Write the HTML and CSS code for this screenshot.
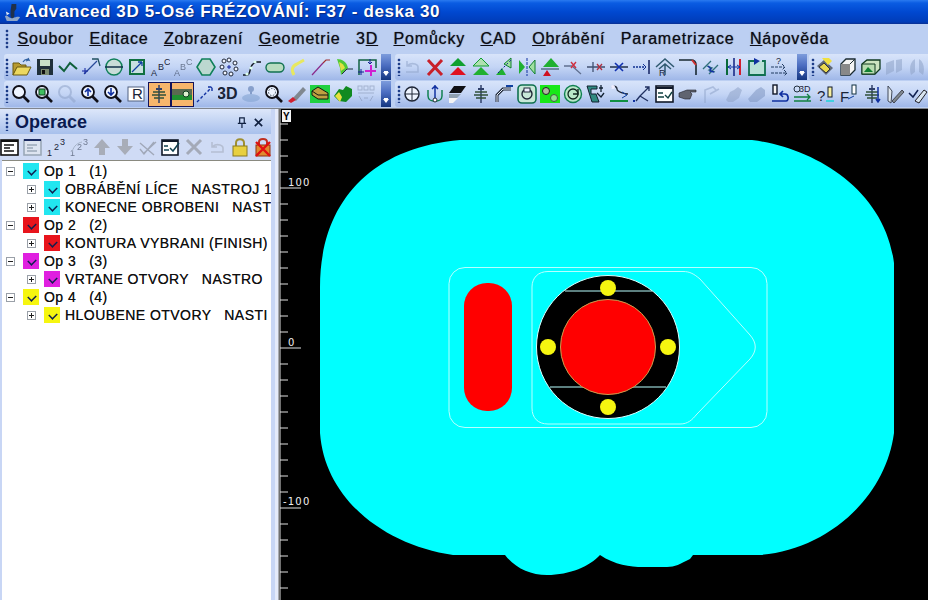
FILE: index.html
```html
<!DOCTYPE html>
<html lang="cs">
<head>
<meta charset="utf-8">
<title>Advanced 3D 5-Osé FRÉZOVÁNÍ</title>
<link rel="stylesheet" href="styles.css">
</head>
<body>
<svg class="defs" aria-hidden="true">
  <defs>
    <symbol id="mag" viewBox="0 0 20 20"><circle cx="8" cy="8" r="6" fill="#eef4ff" stroke="#101018" stroke-width="1.8"/><path d="M12.500 12.500L18 18" stroke="#101018" stroke-width="2.600"/></symbol>
    <symbol id="magf" viewBox="0 0 20 20"><circle cx="8" cy="8" r="6" fill="none" stroke="#8fa3c8" stroke-width="2"/><path d="M12.500 12.500L18 18" stroke="#8fa3c8" stroke-width="3"/></symbol>
    <symbol id="drill" viewBox="0 0 20 20"><path d="M10 1V19" stroke="#30406a" stroke-width="1.500"/><path d="M4 8H16M3 11H17M5 14H15" stroke="#30503a" stroke-width="1.600"/><path d="M7 5H13" stroke="#30406a" stroke-width="2"/></symbol>
  </defs>
</svg>
<div class="app">
  <header class="titlebar">
    <svg class="ic app-ic" viewBox="0 0 20 20"><path d="M9 1h5v5l-2 3v5l-2 4-2-4V8z" fill="#20304a"/><path d="M2 14c3-3 4 3 8 2s5-2 8-1l-3 4H4z" fill="#8fa6c8"/><path d="M3 9l4 2-3 2z" fill="#e0e8f5"/></svg>
    <span>Advanced 3D 5-Osé FRÉZOVÁNÍ: F37 - deska 30</span>
  </header>
  <nav class="menubar">
    <i class="handle"></i>
    <a><u>S</u>oubor</a><a><u>E</u>ditace</a><a><u>Z</u>obrazení</a><a><u>G</u>eometrie</a><a>3<u>D</u></a><a><u>P</u>omůcky</a><a><u>C</u>AD</a><a><u>O</u>brábění</a><a>Parametrizace</a><a><u>N</u>ápověda</a>
  </nav>
  <div class="toolrow">
    <div class="toolbar tb-a">
      <i class="handle"></i>
      <svg class="ic" viewBox="0 0 20 20"><path d="M1 6h6l2 2h5v3H5L1 18z" fill="#b89a30" stroke="#6a5a10"/><path d="M5 10h14l-4 8H1z" fill="#ecd860" stroke="#6a5a10"/><path d="M11 5c2-3 4-3 6-2l-1-2M17 3l-3 1" fill="none" stroke="#3060a0" stroke-width="1.300"/></svg>
      <svg class="ic" viewBox="0 0 20 20"><rect x="2" y="2" width="16" height="16" fill="#20303a"/><rect x="5" y="3" width="10" height="6" fill="#c8e0c8"/><rect x="6" y="12" width="8" height="6" fill="#7a8a70"/><rect x="7" y="13" width="3" height="4" fill="#101010"/></svg>
      <svg class="ic" viewBox="0 0 20 20"><path d="M1 9l5 5 6-8 7 6" fill="none" stroke="#10603a" stroke-width="2"/></svg>
      <svg class="ic" viewBox="0 0 20 20"><path d="M3 17L16 4" stroke="#2a4a9a" stroke-width="1.200"/><path d="M11 2h6l2 7" fill="none" stroke="#205060" stroke-width="1.300"/><path d="M1 14h6M4 11v6" stroke="#1020a0"/></svg>
      <svg class="ic" viewBox="0 0 20 20"><circle cx="10" cy="10" r="8" fill="#c8dcd8" stroke="#10805a" stroke-width="1.500"/><path d="M1 10h18" stroke="#10304a" stroke-width="1.600"/></svg>
      <svg class="ic" viewBox="0 0 20 20"><rect x="3" y="3" width="14" height="14" fill="#c8e0e0" stroke="#107040" stroke-width="2"/><path d="M5 15L15 5M15 5h-4M15 5v4" fill="none" stroke="#1040a0" stroke-width="1.300"/></svg>
      <svg class="ic" viewBox="0 0 20 20"><text x="1" y="19" class="ictext">A</text><text x="8" y="13" class="ictext">B</text><text x="14" y="8" class="ictext">C</text></svg>
      <svg class="ic faded" viewBox="0 0 20 20"><text x="1" y="19" class="ictext">A</text><text x="7" y="13" class="ictext">B</text><text x="13" y="8" class="ictext">C</text></svg>
      <svg class="ic" viewBox="0 0 20 20"><path d="M6 2h8l5 8-5 8H6l-5-8z" fill="#bcd8d0" stroke="#10805a" stroke-width="1.600"/></svg>
      <svg class="ic" viewBox="0 0 20 20" fill="#f0f4ff" stroke="#202838"><circle cx="10" cy="3" r="2"/><circle cx="16" cy="6" r="2"/><circle cx="17" cy="12" r="2"/><circle cx="12" cy="17" r="2"/><circle cx="6" cy="16" r="2"/><circle cx="3" cy="10" r="2"/><circle cx="5" cy="4" r="2"/><path d="M8 10h4M10 8v4" stroke="#1020a0"/></svg>
      <svg class="ic" viewBox="0 0 20 20"><path d="M1 18h4c4 0 2-8 6-11l3-2h5" fill="none" stroke="#101820" stroke-width="1.500"/><circle cx="5" cy="17" r="1.600" fill="#dfe"/><circle cx="9" cy="11" r="1.600" fill="#dfe"/><circle cx="13" cy="5" r="1.600" fill="#dfe"/></svg>
      <svg class="ic" viewBox="0 0 20 20"><rect x="1" y="6" width="18" height="9" rx="4.500" fill="#b8dcc0" stroke="#107050" stroke-width="1.400"/></svg>
      <svg class="ic" viewBox="0 0 20 20"><path d="M6 18C3 13 4 9 9 7l7-4" fill="none" stroke="#e8e860" stroke-width="3"/></svg>
      <svg class="ic" viewBox="0 0 20 20"><path d="M1 18L12 6" stroke="#8a2a8a" stroke-width="1.200"/><path d="M12 6l3-3h4" fill="none" stroke="#a03030" stroke-width="1.200"/></svg>
      <svg class="ic" viewBox="0 0 20 20"><path d="M3 2c5 0 10 3 11 9l-7 7-1-7z" fill="#50c838"/><path d="M5 5c3 1 5 3 6 6l-4 3z" fill="#e0e040"/><path d="M8 17l5-5h6" fill="none" stroke="#203040"/></svg>
      <svg class="ic" viewBox="0 0 20 20"><path d="M2 18V3h17v8" fill="none" stroke="#106040" stroke-width="1.500"/><path d="M8 14h11M14 8v11" stroke="#d020d0" stroke-width="2"/><path d="M1 15h6M4 12v6M13 2v5M11 5l2 2 2-2" fill="none" stroke="#102090"/></svg>
      <b class="chev"></b>
    </div>
    <div class="toolbar tb-b">
      <i class="handle"></i>
      <svg class="ic faded" viewBox="0 0 20 20"><path d="M4 15h12v-5c0-3-5-4-8-3L5 9M5 4v5h5" fill="none" stroke="#8fa3c8" stroke-width="1.600"/></svg>
      <svg class="ic" viewBox="0 0 20 20"><path d="M3 3l14 15M17 3L3 18" stroke="#c8202a" stroke-width="3"/></svg>
      <svg class="ic" viewBox="0 0 20 20"><path d="M10 1l8 8H2z" fill="#10a030"/><path d="M10 10l8 8H2z" fill="#e01020"/></svg>
      <svg class="ic" viewBox="0 0 20 20"><path d="M10 1l8 8H2z" fill="#b0e0b0" stroke="#10a030"/><path d="M10 10l8 8H2z" fill="#20b030"/></svg>
      <svg class="ic" viewBox="0 0 20 20"><path d="M17 1v10l-7-4z" fill="#a0e0a0" stroke="#108030"/><path d="M2 18h10l-4-7z" fill="#20b030"/><path d="M4 16L17 3" stroke="#102090" stroke-dasharray="2 2"/></svg>
      <svg class="ic" viewBox="0 0 20 20"><path d="M2 3l6 7-6 7z" fill="#20b030"/><path d="M18 3l-6 7 6 7z" fill="#a0e0a0" stroke="#108030"/><path d="M10 1v18" stroke="#1030a0" stroke-dasharray="3 1"/></svg>
      <svg class="ic" viewBox="0 0 20 20"><path d="M11 1l8 9H3z" fill="#20b030"/><path d="M1 12h18" stroke="#203a50"/><path d="M7 13l4 6H3z" fill="#d01020"/></svg>
      <svg class="ic" viewBox="0 0 20 20"><path d="M1 9h8l9 8" fill="none" stroke="#607090" stroke-width="1.300"/><path d="M8 5l5 6M13 5l-5 6" stroke="#d03040" stroke-width="1.400"/></svg>
      <svg class="ic" viewBox="0 0 20 20"><path d="M1 10h18M7 5v10" stroke="#405070" stroke-width="1.300"/><path d="M11 7l5 6M16 7l-5 6" stroke="#b03040" stroke-width="1.300"/></svg>
      <svg class="ic" viewBox="0 0 20 20"><path d="M1 10h18" stroke="#20304a" stroke-width="1.300"/><path d="M6 6l4 4-4 4M14 6l-4 4 4 4" fill="none" stroke="#1030b0" stroke-width="1.600"/></svg>
      <svg class="ic" viewBox="0 0 20 20"><path d="M1 10h13" stroke="#103090" stroke-dasharray="2 1" stroke-width="1.300"/><path d="M17 3v14" stroke="#102060" stroke-width="1.500"/><path d="M11 7l3 3-3 3" fill="none" stroke="#103090"/></svg>
      <svg class="ic" viewBox="0 0 20 20"><path d="M1 10l9-8 9 8M4 12l6-5 6 5M10 7v11" fill="none" stroke="#305a70" stroke-width="1.500"/><text x="4" y="19" class="ictext">R</text></svg>
      <svg class="ic" viewBox="0 0 20 20"><path d="M1 3h12c3 0 5 2 5 5v10" fill="none" stroke="#182830" stroke-width="1.600"/><path d="M14 3l4 5" stroke="#d03030" stroke-width="2"/></svg>
      <svg class="ic" viewBox="0 0 20 20"><path d="M2 12l8-8M8 17l9-9M6 9l5 2-3 2 6 2" fill="none" stroke="#30707a" stroke-width="1.300"/><path d="M7 9l3 3-1 2 4 1" fill="none" stroke="#1030a0" stroke-width="1.300"/></svg>
      <svg class="ic" viewBox="0 0 20 20"><path d="M3 2v16" stroke="#0a6a3a" stroke-width="2"/><path d="M10 1v18" stroke="#102080" stroke-width="1.500"/><path d="M16 2v16" stroke="#d02030" stroke-width="2"/><path d="M4 10h12M7 8l-3 2 3 2M13 8l3 2-3 2" fill="none" stroke="#1030a0"/></svg>
      <svg class="ic" viewBox="0 0 20 20"><path d="M7 4H2v14h16V4h-3" fill="#b8e0d8" stroke="#107050" stroke-width="1.800"/><path d="M7 1l6 3-6 4z" fill="#1030a0"/></svg>
      <svg class="ic" viewBox="0 0 20 20"><path d="M1 10h13M1 16h16M12 7l3 3-3 3M14 13l3 3-3 3" fill="none" stroke="#203a60" stroke-dasharray="3 1"/><text x="6" y="7" class="ictext">?</text></svg>
      <b class="chev"></b>
    </div>
    <div class="toolbar tb-c">
      <i class="handle"></i>
      <svg class="ic" viewBox="0 0 20 20"><path d="M2 9l9 9 7-7-9-8z" fill="#606a78"/><path d="M7 1l6 7 4-4-3-3z" fill="#f0e040"/><path d="M4 10l5-4 6 6-4 4z" fill="#e8d850" stroke="#30303a"/></svg>
      <svg class="ic" viewBox="0 0 20 20"><path d="M3 7l5-5h9v11l-5 5H3z" fill="#f4f4f4" stroke="#1a2a30" stroke-width="1.300"/><path d="M3 7h9v11H3z" fill="#888"/><path d="M12 7l5-5" stroke="#1a2a30"/></svg>
      <svg class="ic" viewBox="0 0 20 20"><path d="M1 7l5-4h13v9l-5 5H1z" fill="#cde4c0" stroke="#103a20" stroke-width="1.300"/><path d="M1 7h13v10H1z" fill="#b8dcb0" stroke="#103a20"/><path d="M3 15l4-5 5 5z" fill="#108030"/></svg>
      <svg class="ic faded" viewBox="0 0 20 20"><path d="M2 6l8-3v11l-8 4zM12 3l6-1v11l-6 3z" fill="#8fa3c8"/></svg>
      <svg class="ic faded" viewBox="0 0 20 20"><path d="M8 2C3 5 2 12 4 18l4-3zM12 2c5 3 6 10 4 16l-4-3z" fill="#8fa3c8"/></svg>
    </div>
  </div>
  <div class="toolrow">
    <div class="toolbar tb-a tight">
      <i class="handle"></i>
      <svg class="ic"><use href="#mag"/></svg>
      <svg class="ic" viewBox="0 0 20 20"><use href="#mag"/><rect x="5" y="5" width="6" height="6" fill="#40c060" stroke="#104020"/></svg>
      <svg class="ic faded"><use href="#magf"/></svg>
      <svg class="ic" viewBox="0 0 20 20"><use href="#mag"/><path d="M8 12V5M5 8l3-3 3 3" fill="none" stroke="#1030a0" stroke-width="1.600"/></svg>
      <svg class="ic" viewBox="0 0 20 20"><use href="#mag"/><path d="M8 4v7M5 8l3 3 3-3" fill="none" stroke="#1030a0" stroke-width="1.600"/></svg>
      <svg class="ic" viewBox="0 0 20 20"><rect x="2" y="3" width="16" height="14" fill="#fff" stroke="#506080"/><text x="6" y="15" class="ictext big">R</text></svg>
      <span class="active"><svg class="ic"><use href="#drill"/></svg></span>
      <span class="active"><svg class="ic" viewBox="0 0 20 20"><rect x="0" y="5" width="20" height="6" fill="#5a6a50"/><rect x="0" y="11" width="20" height="5" fill="#209030"/><circle cx="14" cy="10" r="3" fill="#e0f0d0" stroke="#104020"/></svg></span>
      <svg class="ic" viewBox="0 0 20 20"><path d="M2 18l15-15M13 3h4v4" fill="none" stroke="#1030a0" stroke-width="1.400" stroke-dasharray="3 2"/></svg>
      <svg class="ic" viewBox="0 0 20 20"><text x="-1" y="15" class="ictext three">3D</text></svg>
      <svg class="ic faded" viewBox="0 0 20 20"><circle cx="10" cy="5" r="3" fill="#5070a8"/><path d="M9 5h2v8H9z" fill="#5070a8"/><ellipse cx="10" cy="14" rx="9" ry="4" fill="#7fa0d0"/></svg>
      <svg class="ic" viewBox="0 0 20 20"><use href="#mag"/><circle cx="8" cy="8" r="3.500" fill="none" stroke="#405060" stroke-dasharray="1.500 1.500"/></svg>
      <svg class="ic" viewBox="0 0 20 20"><path d="M6 14L16 3l3 3-10 11z" fill="#808890"/><path d="M1 17l5-4 3 3-5 3z" fill="#d02030"/></svg>
      <svg class="ic" viewBox="0 0 20 20"><rect x="0" y="1" width="20" height="18" fill="#20d040"/><path d="M2 7l6-4 10 6v6H8L2 11z" fill="#c0a040" stroke="#101a10"/><path d="M2 7l6 4h10" fill="none" stroke="#101a10"/></svg>
      <svg class="ic" viewBox="0 0 20 20"><path d="M1 12l5-7 4 1 3-4 6 3v7l-6 6-7-1z" fill="#108a20"/><path d="M2 12l4-4 3 5-2 5z" fill="#e8e040"/></svg>
      <svg class="ic faded" viewBox="0 0 20 20" fill="none" stroke="#8090b0"><rect x="2" y="2" width="4" height="4"/><rect x="8" y="2" width="4" height="4"/><rect x="14" y="2" width="4" height="4"/><path d="M2 9h16M3 12l3 5M17 12l-3 5M8 14h4"/></svg>
      <b class="chev"></b>
    </div>
    <div class="toolbar tb-b2">
      <i class="handle"></i>
      <svg class="ic" viewBox="0 0 20 20"><circle cx="10" cy="10" r="7" fill="#eef4ff" stroke="#202838" stroke-width="1.500"/><path d="M3 10h14M10 3v14" stroke="#202838"/></svg>
      <svg class="ic" viewBox="0 0 20 20"><path d="M3 6v6c0 7 14 7 14 0V6" fill="none" stroke="#108050" stroke-width="1.500"/><path d="M10 1v14M7 5l3-3 3 3" fill="none" stroke="#1030a0" stroke-width="1.500"/><circle cx="10" cy="16" r="2" fill="#fff" stroke="#202838"/></svg>
      <svg class="ic" viewBox="0 0 20 20"><path d="M6 2h12l-5 7H1z" fill="#101014"/><path d="M1 10h12l-4 4H1z" fill="#90a0b0"/><path d="M1 14h9l-5 5H1z" fill="#f4f4f4"/></svg>
      <svg class="ic"><use href="#drill"/></svg>
      <svg class="ic" viewBox="0 0 20 20"><path d="M3 18v-7l6-6h8" fill="none" stroke="#202838" stroke-width="3"/><path d="M3 18v-7l6-6h8" fill="none" stroke="#e8f0ff" stroke-width="1"/><path d="M12 2h7" stroke="#1040a0" stroke-width="2"/></svg>
      <svg class="ic" viewBox="0 0 20 20"><rect x="1" y="1" width="18" height="18" rx="4" fill="#c8e8d8" stroke="#107050" stroke-width="1.600"/><circle cx="10" cy="10" r="5" fill="none" stroke="#202838" stroke-width="1.400"/><rect x="7" y="4" width="6" height="4" fill="#eef" stroke="#202838"/></svg>
      <svg class="ic" viewBox="0 0 20 20"><rect x="0" y="1" width="20" height="18" fill="#18e818"/><circle cx="6" cy="7" r="3.500" fill="#b0b8a0" stroke="#202020"/><circle cx="14" cy="14" r="3.500" fill="#90e090" stroke="#406040"/></svg>
      <svg class="ic" viewBox="0 0 20 20"><circle cx="10" cy="10" r="8.500" fill="#b8e8c8" stroke="#108050" stroke-width="1.400"/><circle cx="10" cy="10" r="5" fill="none" stroke="#102820" stroke-width="1.300"/><path d="M10 10h5V5" fill="none" stroke="#102820" stroke-width="1.400"/></svg>
      <svg class="ic" viewBox="0 0 20 20"><path d="M1 2h10v3H5v5h5l3 8H6z" fill="#308a80" stroke="#102030"/><path d="M15 1v7M13 4h4M11 9l4 4 3-4" fill="none" stroke="#102030" stroke-width="1.300"/></svg>
      <svg class="ic" viewBox="0 0 20 20"><path d="M3 4c0-3 5-2 5 1s8 5 11 5" fill="none" stroke="#202838" stroke-width="1.300"/><circle cx="4" cy="3" r="2" fill="#eef"/><path d="M1 17h18" stroke="#109040" stroke-width="2"/><path d="M13 8l5 3-5 3" fill="none" stroke="#1040a0"/></svg>
      <svg class="ic" viewBox="0 0 20 20"><path d="M8 12l9-9M13 3h4v4M8 12l8 5M8 12l-4 5" fill="none" stroke="#203060" stroke-width="1.300"/><rect x="1" y="16" width="2" height="2" fill="#1030a0"/></svg>
      <svg class="ic" viewBox="0 0 20 20"><rect x="1" y="2" width="17" height="16" fill="#fff" stroke="#101828" stroke-width="1.600"/><path d="M1 4h17" stroke="#101828" stroke-width="2"/><path d="M3 9h5M3 13h6M10 11l3 3 4-6" fill="none" stroke="#104040" stroke-width="1.400"/></svg>
      <svg class="ic" viewBox="0 0 20 20"><path d="M1 9l8-3h9v2h-6l2 2-2 5H7L1 13z" fill="#606470" stroke="#202028" stroke-width=".6"/></svg>
      <svg class="ic faded" viewBox="0 0 20 20"><path d="M4 19V6l8-3 3 3M9 10l9-5" fill="none" stroke="#8fa3c8" stroke-width="1.600"/></svg>
      <svg class="ic faded" viewBox="0 0 20 20"><path d="M2 16l4-8 4-2 4-3 4 3-3 8-6 4H4z" fill="#8fa3c8"/></svg>
      <svg class="ic faded" viewBox="0 0 20 20"><path d="M1 15l8-9 5-3 4 3v6l-8 6H3z" fill="#7f96c2"/></svg>
      <svg class="ic" viewBox="0 0 20 20"><rect x="3" y="1" width="4" height="9" fill="#f4f4f4" stroke="#101828" stroke-width="1.400"/><path d="M2 17h14c3 0 3-7-1-7h-4M13 7l-3 3 3 3" fill="none" stroke="#1030a0" stroke-width="1.700"/></svg>
      <svg class="ic" viewBox="0 0 20 20"><text x="6" y="8" class="ictext">3D</text><circle cx="4" cy="5" r="3" fill="none" stroke="#203040"/><path d="M1 13h16M1 17h17M14 10l3 3-3 3" fill="none" stroke="#108040" stroke-width="1.300"/></svg>
      <svg class="ic" viewBox="0 0 20 20"><text x="1" y="17" class="ictext big">?</text><rect x="12" y="3" width="4" height="10" fill="#f8f0a0" stroke="#101828"/><path d="M10 17h8" stroke="#40d0e0" stroke-width="2"/></svg>
      <svg class="ic" viewBox="0 0 20 20"><text x="1" y="18" class="ictext big">F</text><rect x="13" y="1" width="4" height="9" fill="#fff" stroke="#103040"/><path d="M9 15l6-3" stroke="#1040a0"/></svg>
      <svg class="ic" viewBox="0 0 20 20"><use href="#drill"/><path d="M16 3v15M14 15l2 3 2-3" fill="none" stroke="#1030a0" stroke-width="1.500"/></svg>
      <svg class="ic" viewBox="0 0 20 20"><path d="M3 2v15l3 2 1-12-4-5z" fill="#e0e8f0" stroke="#404858"/><path d="M7 17l10-11 2 2L9 19z" fill="#808890" stroke="#202028" stroke-width=".7"/></svg>
      <svg class="ic" viewBox="0 0 20 20"><path d="M1 9l4 4 5-7" fill="none" stroke="#102050" stroke-width="1.500"/><path d="M7 17l9-11 3 2-8 11z" fill="#d8e4f0" stroke="#202028"/></svg>
    </div>
  </div>
  <main class="workspace">
    <aside class="panel">
      <div class="panel-head">
        <i class="handle"></i>
        <h2>Operace</h2>
        <svg class="pin" viewBox="0 0 12 12"><path d="M4 1h5v6H4zM2 7h9M6.500 7v5" fill="none" stroke="#102040" stroke-width="1.300"/></svg>
        <svg class="pin" viewBox="0 0 12 12"><path d="M2 2l8 8M10 2l-8 8" stroke="#102040" stroke-width="1.800"/></svg>
      </div>
      <div class="panel-tools">
        <svg class="ic" viewBox="0 0 20 20"><rect x="1" y="3" width="17" height="15" fill="#fff" stroke="#101010" stroke-width="1.600"/><path d="M1 4h17" stroke="#101010" stroke-width="2"/><path d="M4 8h10M4 11h6M4 14h10" stroke="#101010" stroke-width="1.400"/></svg>
        <svg class="ic" viewBox="0 0 20 20"><rect x="1" y="3" width="17" height="15" fill="#dde4f0" stroke="#9aa8b8" stroke-width="1.600"/><path d="M1 3h17" stroke="#1a2a60" stroke-width="2"/><path d="M4 8h10M4 11h6M4 14h10" stroke="#9aa8b8" stroke-width="1.400"/></svg>
        <svg class="ic" viewBox="0 0 20 20"><text x="1" y="19" class="ictext">1</text><text x="8" y="13" class="ictext">2</text><text x="14" y="8" class="ictext">3</text></svg>
        <svg class="ic faded" viewBox="0 0 20 20"><text x="1" y="19" class="ictext">1</text><text x="8" y="13" class="ictext">2</text><text x="14" y="8" class="ictext">3</text><path d="M3 15C5 8 9 6 13 5" fill="none" stroke="#8090a0"/></svg>
        <svg class="ic" viewBox="0 0 20 20"><path d="M10 2l8 9h-5v7H7v-7H2z" fill="#a8adb8"/></svg>
        <svg class="ic" viewBox="0 0 20 20"><path d="M10 18l8-9h-5V2H7v7H2z" fill="#a8adb8"/></svg>
        <svg class="ic" viewBox="0 0 20 20"><path d="M2 12l4 5 10-12M5 17l13-12M2 6l14 12" fill="none" stroke="#a0a8b8" stroke-width="1.400"/></svg>
        <svg class="ic" viewBox="0 0 20 20"><rect x="1" y="3" width="16" height="15" fill="#fff" stroke="#101828" stroke-width="1.600"/><path d="M1 4h16" stroke="#101828" stroke-width="2"/><path d="M3 9h4M3 13h5M9 11l3 3 6-8" fill="none" stroke="#104050" stroke-width="1.500"/></svg>
        <svg class="ic" viewBox="0 0 20 20"><path d="M3 3l14 14M17 3L3 17" stroke="#a4aab8" stroke-width="3"/></svg>
        <svg class="ic faded" viewBox="0 0 20 20"><path d="M4 15h12v-4c0-3-5-4-8-3L5 10M5 5v5h5" fill="none" stroke="#a0a8b8" stroke-width="1.600"/></svg>
        <svg class="ic" viewBox="0 0 20 20"><path d="M6 9V6c0-5 8-5 8 0v3" fill="none" stroke="#a09030" stroke-width="2"/><rect x="3" y="9" width="14" height="10" fill="#e8d040" stroke="#8a7a20"/></svg>
        <svg class="ic" viewBox="0 0 20 20"><path d="M6 8V5c0-4 8-4 8 0v3" fill="none" stroke="#c03020" stroke-width="2"/><rect x="3" y="8" width="14" height="11" fill="#e08a30" stroke="#903010"/><path d="M3 5l14 14M17 5L3 19" stroke="#e01010" stroke-width="2.400"/></svg>
      </div>
      <div class="tree">
        <div class="node op"><i class="exp minus"></i><i class="swatch cyan"></i><span>Op 1   (1)</span></div>
        <div class="node kid"><i class="exp"></i><i class="swatch cyan"></i><span>OBRÁBĚNÍ LÍCE   NASTROJ 1</span></div>
        <div class="node kid"><i class="exp"></i><i class="swatch cyan"></i><span>KONECNE OBROBENI   NAST</span></div>
        <div class="node op"><i class="exp minus"></i><i class="swatch red"></i><span>Op 2   (2)</span></div>
        <div class="node kid"><i class="exp"></i><i class="swatch red"></i><span>KONTURA VYBRANI (FINISH)</span></div>
        <div class="node op"><i class="exp minus"></i><i class="swatch magenta"></i><span>Op 3   (3)</span></div>
        <div class="node kid"><i class="exp"></i><i class="swatch magenta"></i><span>VRTANE OTVORY   NASTRO</span></div>
        <div class="node op"><i class="exp minus"></i><i class="swatch yellow"></i><span>Op 4   (4)</span></div>
        <div class="node kid"><i class="exp"></i><i class="swatch yellow"></i><span>HLOUBENE OTVORY   NASTI</span></div>
      </div>
    </aside>
    <section class="canvas">
      <svg class="drawing" viewBox="279 109 649 491">
        <path class="part" d="M320 287C320 205 368 148 460 140H752C815 148 885 190 894 263V433C885 500 825 550 760 555H693L690 559C680 564 675 567 667 567H643C630 567 615 565 600 555C590 566 570 575 547 575C530 575 515 568 505 555H453C385 545 325 500 320 433Z"/>
        <rect class="contour" x="449" y="267.500" width="318" height="160" rx="16"/>
        <path class="contour" d="M548 271.500H683C690 271.500 694 274 700 279L750 335C757 343 757 351 750 359L697 414C692 420 688 424 680 424H548C538 424 532 418 532 408V287C532 278 538 271.500 548 271.500Z"/>
        <circle class="hole" cx="608" cy="347" r="71.500"/>
        <path class="contour" d="M565 291H652M550 387H666"/>
        <rect class="pocket" x="464" y="283" width="48" height="128" rx="23"/>
        <circle class="pocket ring" cx="608" cy="347" r="47.500"/>
        <circle class="drillpt" cx="608" cy="288" r="8"/>
        <circle class="drillpt" cx="548" cy="347" r="8"/>
        <circle class="drillpt" cx="668" cy="347" r="8"/>
        <circle class="drillpt" cx="608" cy="407" r="8"/>
        <path class="ruler" d="M280 109V600M280 124h8M280 140h8M280 156h8M280 172h8M280 188h21M280 204h8M280 220h8M280 236h8M280 252h8M280 268h8M280 284h8M280 300h8M280 316h8M280 332h8M280 348h21M280 364h8M280 380h8M280 396h8M280 412h8M280 428h8M280 444h8M280 460h8M280 476h8M280 492h8M280 508h21M280 524h8M280 540h8M280 556h8M280 572h8M280 588h8"/>
        <text class="rl" x="288" y="186">100</text>
        <text class="rl" x="288" y="346">0</text>
        <text class="rl" x="283" y="505">-100</text>
        <rect class="ybox" x="282" y="110" width="9" height="12"/>
        <text class="yl" x="283" y="120">Y</text>
      </svg>
    </section>
  </main>
</div>
</body>
</html>
```
FILE: styles.css
```css
* { box-sizing: border-box; }
html, body { margin: 0; height: 100%; overflow: hidden; }
body { font-family: "Liberation Sans", Arial, sans-serif; background: #c4d3f2; }
.defs { position: absolute; width: 0; height: 0; }
.app { width: 928px; height: 600px; display: flex; flex-direction: column; overflow: hidden; }

.titlebar {
  height: 24px; flex: none; display: flex; align-items: center; gap: 3px; padding-left: 3px;
  background: linear-gradient(#2a7af0 0, #0a5ce2 3px, #0048d0 12px, #003cb8 22px, #0a2f90 24px);
  color: #fff; font-weight: bold; font-size: 17px; letter-spacing: .6px;
  text-shadow: 1px 1px 1px #0a2a80;
}
.titlebar .app-ic { width: 19px; height: 19px; }

.menubar {
  height: 30px; flex: none; display: flex; align-items: center; gap: 15.500px; padding-left: 5px;
  background: #bccff2; color: #0c0c14; font-size: 16px; letter-spacing: .8px; text-shadow: 0 0 1px #40485a;
}
.menubar a { white-space: nowrap; }
.menubar a:first-of-type { margin-left: -7px; }
.menubar .handle { height: 20px; }

.handle {
  display: block; flex: none; width: 4px; height: 18px; margin-right: 0;
  background: radial-gradient(circle at 2px 2px, #1c3c88 1.500px, transparent 1.600px) 0 0 / 4px 4px;
}

.toolrow { height: 27px; flex: none; display: flex; background: #bccff2; }
.toolbar {
  display: flex; align-items: center; gap: 3px; height: 26px; overflow: hidden; flex: none;
  background: linear-gradient(#d8e4fa, #c4d5f5 50%, #9fb7e8);
  border-radius: 3px 0 0 3px;
}
.tb-a { width: 387px; margin-left: 4px; padding-left: 1px; }
.tb-a.tight .handle { margin-right: -1px; }
.tb-b { width: 412px; margin-left: 4px; padding-left: 2px; }
.tb-c { width: 120px; margin-left: 2px; padding-left: 2px; }
.tb-b2 { width: 533px; margin-left: 4px; padding-left: 2px; }
.tb-b .handle, .tb-b2 .handle { margin-right: -2px; }
.tb-c .handle { margin-right: -3px; }

.ic { width: 20px; height: 20px; flex: none; display: block; }
.faded { opacity: .55; }
.ictext { font: 9px "Liberation Sans", sans-serif; fill: #1a2438; }
.ictext.big { font-size: 15px; }
.ictext.three { font-size: 16px; font-weight: bold; }

.active {
  flex: none; width: 23px; height: 25px; margin: 0 -1.500px; display: flex; align-items: center; justify-content: center;
  background: #f6b66c; border: 1px solid #14145a;
}
.chev {
  margin-left: auto; width: 10px; height: 26px; flex: none; position: relative;
  background: linear-gradient(#7d9cdc, #4a6cc0 45%, #143680);
}
.chev::after {
  content: ""; position: absolute; left: 2px; bottom: 4px; width: 0; height: 0;
  border: 3px solid transparent; border-top: 4px solid #fff; border-bottom: 0;
  box-shadow: 0 -2px 0 -1px #fff;
}

.workspace { flex: 1; min-height: 0; display: flex; border-top: 1px solid #80848c; }
.panel { width: 279px; flex: none; display: flex; flex-direction: column; background: #c8d6f5; padding-right: 7px; border-right: 1px solid #a8aab0; box-shadow: inset -3px 0 0 #e4eafa; }
.panel-head {
  height: 25px; flex: none; display: flex; align-items: center; padding-left: 5px; padding-top: 1px;
  background: linear-gradient(#dde7fa, #a8c0ec);
}
.panel-head h2 { margin: 0 auto 0 6px; font-size: 18px; font-weight: bold; color: #0a1a50; }
.pin { width: 11px; height: 11px; margin-right: 6px; display: block; }
.pin:last-child { margin-right: 7px; }
.panel-tools { height: 26px; flex: none; display: flex; align-items: center; gap: 3px; padding-left: 0; background: #cfdbf5; }
.tree {
  flex: 1; margin-left: 2px; overflow: hidden; background: #fff; border-top: 1px solid #8a8a80; padding-top: 1px;
  font-size: 14px; letter-spacing: .45px; color: #101010; text-shadow: 0 0 .6px #505050;
}
.node { height: 18px; display: flex; align-items: center; white-space: pre; overflow: hidden; }
.node.op { padding-left: 4px; }
.node.kid { padding-left: 25px; }
.exp {
  width: 9px; height: 9px; flex: none; margin-right: 8px; position: relative;
  background: #fff; border: 1px solid #9aa0a8;
  background-image: linear-gradient(#202020, #202020), linear-gradient(#202020, #202020);
  background-size: 5px 1px, 1px 5px; background-position: center, center; background-repeat: no-repeat;
}
.exp.minus { background-size: 5px 1px, 0 0; }
.swatch {
  width: 16px; height: 16px; flex: none; margin-right: 5px; position: relative; display: block;
}
.swatch::after {
  content: ""; position: absolute; left: 5px; top: 3px; width: 6px; height: 8px;
  border: solid #102050; border-width: 0 2px 2px 0; transform: rotate(45deg) scale(.75);
}
.cyan { background: #22e6f0; } .red { background: #e8141c; } .magenta { background: #e020e0; } .yellow { background: #f6f610; }

.canvas { flex: 1; min-width: 0; background: #000; }
.drawing { display: block; width: 649px; height: 491px; }
.part { fill: #00ffff; }
.contour { fill: none; stroke: #b8ffff; stroke-width: 1; }
.hole { fill: #000; stroke: #d8ffff; stroke-width: 1; }
.pocket { fill: #ff0000; }
.pocket.ring { stroke: #c8a050; stroke-width: 1; }
.drillpt { fill: #f6f610; }
.ruler { fill: none; stroke: #e0e0e0; stroke-width: 1; }
.rl { font: 10px "DejaVu Sans", sans-serif; letter-spacing: 1.200px; fill: #f0f0f0; }
.ybox { fill: #f4f4f4; }
.yl { font: bold 10px "Liberation Sans", sans-serif; fill: #000; }
```
